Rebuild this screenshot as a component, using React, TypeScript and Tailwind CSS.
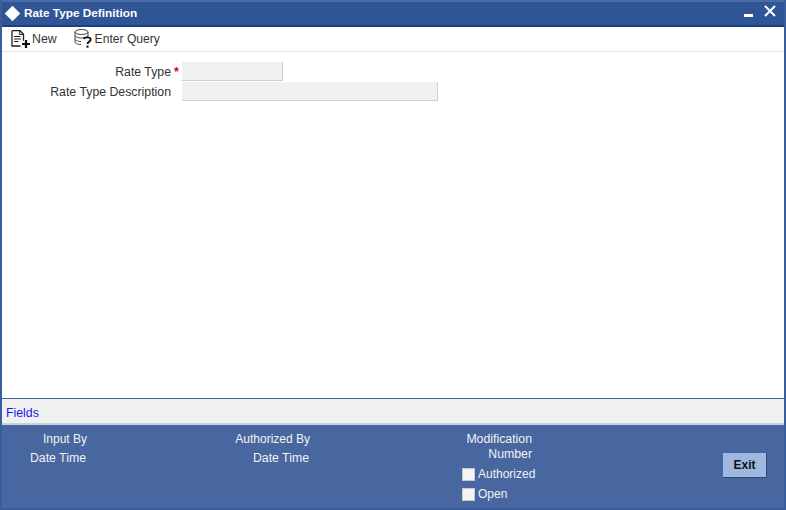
const NewIcon = () => (
  <svg width="20" height="18" viewBox="0 0 20 18" fill="none" stroke="#222" strokeWidth="1.3">
    <path d="M1 .7h8l3.500 3.500v6.500M1 .7v15.300h8.500" />
    <path d="M8.700 .7v3.800h3.800M3 6.500h6.500M3 9h7M3 11.500h4.500" strokeWidth="1" />
    <path d="M15 10v8M11 14h8" strokeWidth="2.200" stroke="#111" />
  </svg>
);

const QueryIcon = () => (
  <svg width="19" height="19" viewBox="0 0 19 19" fill="none" stroke="#444" strokeWidth="1">
    <ellipse cx="7.500" cy="3" rx="6.500" ry="2.500" />
    <path d="M1 3v10c0 1.400 2.700 2.500 6 2.500M14 3v4M1 6.500c0 1.400 2.900 2.500 6.500 2.500s6.500-1.100 6.500-2.500M1 10c0 1.400 2.700 2.500 6 2.500" />
    <path d="M10 10c.5-2.300 6.500-2.300 6.700.5.100 2.200-3.200 2-3.200 4.500" stroke="#111" strokeWidth="1.900" />
    <path d="M13.500 16.500v2.200" stroke="#111" strokeWidth="2" />
  </svg>
);

export default function App() {
  return (
    <div className="flex h-[510px] w-[786px] flex-col overflow-hidden border-x-2 border-b-2 border-[#3a5d9c] bg-white font-['Liberation_Sans',Arial,sans-serif] text-[12.3px] text-[#333]">
      {/* Title bar */}
      <div className="flex h-[27px] shrink-0 items-center justify-between border-t-2 border-b-2 border-t-[#4a6da8] border-b-[#1d3f7d] bg-[#2f5596] pr-[8px] pl-[3px] text-white">
        <div className="flex items-center gap-[3px]">
          <div className="ml-[2px] h-[11px] w-[11px] rotate-45 bg-white" />
          <span className="mt-[1px] ml-[3px] text-[11.8px] font-bold">Rate Type Definition</span>
        </div>
        <div className="flex items-center gap-[11px]">
          <div className="mt-[3px] h-[3px] w-[9px] bg-white" />
          <svg width="12" height="12" viewBox="0 0 12 12" stroke="white" strokeWidth="2" className="mb-[5px]">
            <path d="M1 1l10 10M11 1L1 11" />
          </svg>
        </div>
      </div>

      {/* Toolbar */}
      <div className="flex h-[25px] shrink-0 items-center gap-[17px] border-b border-[#e4e4e4] pl-[9px]">
        <div className="flex items-center gap-[1px]">
          <NewIcon />
          <span className="mt-[1px]">New</span>
        </div>
        <div className="flex items-center gap-[2px]">
          <QueryIcon />
          <span className="mt-[1px] text-[12.1px]">Enter Query</span>
        </div>
      </div>

      {/* Form */}
      <div className="flex flex-1 flex-col pt-[9px]">
        <div className="flex h-[20px] items-center">
          <label className="mt-[2px] w-[169px] text-right">Rate Type</label>
          <span className="mt-[2px] w-[11px] pl-[3px] font-bold text-[#e00000]">*</span>
          <div className="h-[19px] w-[101px] border-r border-b border-[#d0d0d0] bg-[#f1f1f1]" />
        </div>
        <div className="flex h-[20px] items-center">
          <label className="mt-[2px] w-[169px] text-right">Rate Type Description</label>
          <span className="w-[11px]" />
          <div className="h-[19px] w-[256px] border-r border-b border-[#d0d0d0] bg-[#f1f1f1]" />
        </div>
      </div>

      {/* Fields bar */}
      <div className="flex h-[27px] shrink-0 items-center border-t border-b-2 border-t-[#4467a3] border-b-[#c5d0e4] bg-[#f0f0f0] pt-[4px] pl-[4px] text-[#1a1aee]">
        Fields
      </div>

      {/* Footer */}
      <div className="flex max-h-[83px] flex-1 items-start bg-[#48669f] text-[#f2f2f2]">
        <div className="mt-[7px] flex w-[85px] flex-col items-end gap-[4px] leading-[15px]">
          <span className="text-[12px]">Input By</span>
          <span className="mr-[1px]">Date Time</span>
        </div>
        <div className="mt-[7px] ml-[222px] flex w-[1px] flex-col items-end gap-[4px] leading-[15px]">
          <span className="whitespace-nowrap text-[12px]">Authorized By</span>
          <span className="mr-[1px] whitespace-nowrap">Date Time</span>
        </div>
        <div className="mt-[7px] ml-[221px] flex w-[1px] flex-col items-end leading-[15px]">
          <span>Modification</span>
          <span>Number</span>
          <div className="mt-[5px] mr-[-10px] flex flex-col gap-[5px] text-[12px]">
            <div className="flex w-[80px] items-center gap-[3px]">
              <div className="h-[13px] w-[13px] shrink-0 border border-[#c8c8c8] bg-[#f4f4f4]" />
              <span>Authorized</span>
            </div>
            <div className="flex w-[80px] items-center gap-[3px]">
              <div className="h-[13px] w-[13px] shrink-0 border border-[#c8c8c8] bg-[#f4f4f4]" />
              <span>Open</span>
            </div>
          </div>
        </div>
        <button className="mt-[28px] ml-[191px] h-[25px] w-[44px] border-r border-b border-[#2f4670] bg-[#9db9e0] text-[12px] font-bold text-[#111]">
          Exit
        </button>
      </div>
    </div>
  );
}
